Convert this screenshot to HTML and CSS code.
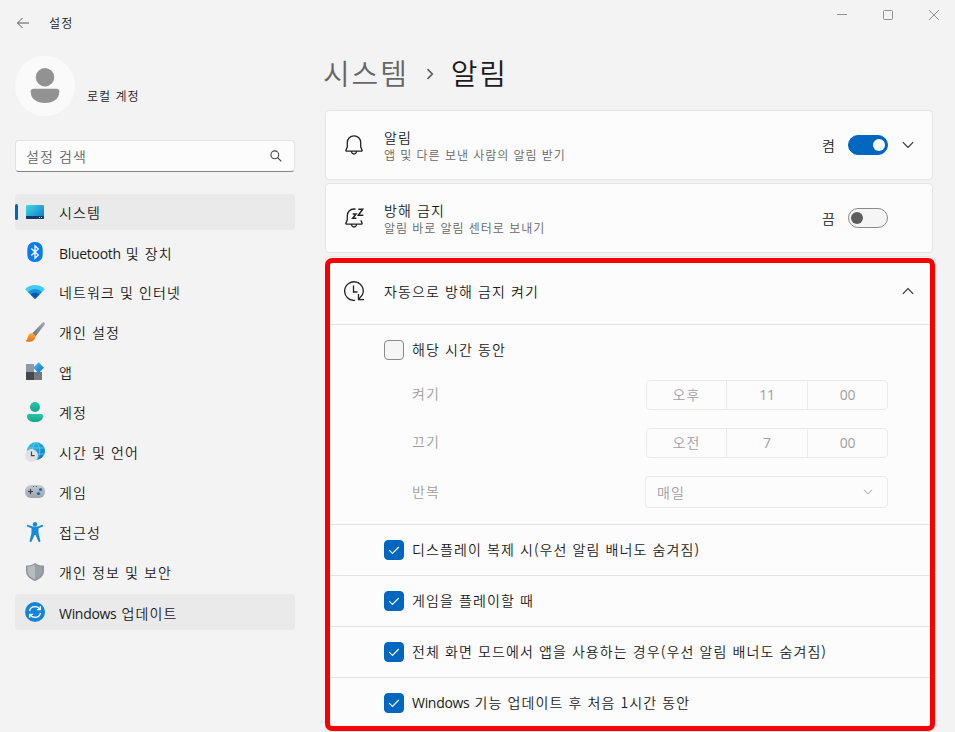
FILE: index.html
```html
<!DOCTYPE html>
<html lang="ko">
<head>
    <meta charset="UTF-8">
    <meta name="viewport" content="width=device-width, initial-scale=1.0">
    <title>설정</title>
    <link rel="stylesheet" href="styles.css">
</head>
<body>
    <div class="window">
        <aside class="sidebar">
            <div class="titlebar">
                <svg class="back" width="14" height="12" viewBox="0 0 14 12"><path d="M13 6H1.5M6.5 1L1.5 6l5 5"/></svg>
                <span>설정</span>
            </div>

            <div class="profile">
                <svg class="avatar" width="60" height="60" viewBox="0 0 60 60">
                    <circle cx="30" cy="30" r="30" fill="#fafafa"/>
                    <circle cx="30" cy="21.3" r="9.2" fill="#929292"/>
                    <path d="M18.5 32.7h23a2.8 2.8 0 0 1 2.8 2.8c0 7.5-6 11.5-14.3 11.5s-14.3-4-14.3-11.5a2.8 2.8 0 0 1 2.8-2.8z" fill="#929292"/>
                </svg>
                <span class="account">로컬 계정</span>
            </div>

            <div class="search">
                <span>설정 검색</span>
                <svg width="12" height="12" viewBox="0 0 12 12"><circle cx="4.8" cy="4.8" r="3.9"/><path d="M7.6 7.6l3.7 3.7"/></svg>
            </div>

            <nav class="menu">
                <a class="item active">
                    <svg width="20" height="20" viewBox="0 0 20 20">
                        <defs><linearGradient id="sys" x1="0" y1="0" x2="1" y2="1"><stop offset="0" stop-color="#3ddbe4"/><stop offset="1" stop-color="#1272c4"/></linearGradient></defs>
                        <rect x="1" y="3" width="18" height="14" rx="1" fill="url(#sys)"/>
                        <path d="M1 14h18v2a1 1 0 0 1-1 1H2a1 1 0 0 1-1-1z" fill="#0b3f66"/>
                        <path d="M14 15h1v1h-1zM16 15h1v1h-1z" fill="#9fd8ee"/>
                    </svg>
                    <span>시스템</span>
                </a>
                <a class="item">
                    <svg width="20" height="20" viewBox="0 0 20 20">
                        <rect x="2.3" y="0" width="15.4" height="20" rx="7" fill="#0a7cf0"/>
                        <path d="M6.3 6.5l7 6.5-3.3 3.3V3.7l3.3 3.3-7 6.5" fill="none" stroke="#fff" stroke-width="1.3"/>
                    </svg>
                    <span class="mixed"><b class="latin">Bluetooth</b> 및 장치</span>
                </a>
                <a class="item">
                    <svg width="20" height="20" viewBox="0 0 20 20">
                        <path d="M.2 7.2C5.5 1.7 14.5 1.7 19.8 7.2L10 17z" fill="#41cbf5"/>
                        <path d="M3 10C7 6 13 6 17 10l-7 7z" fill="#1a8fdc"/>
                        <path d="M5.6 12.5c2.6-2.3 6.2-2.3 8.8 0L10 17z" fill="#0b5aa8"/>
                    </svg>
                    <span>네트워크 및 인터넷</span>
                </a>
                <a class="item">
                    <svg width="20" height="20" viewBox="0 0 20 20">
                        <defs>
                            <linearGradient id="handle" x1="1" y1="0" x2="0" y2="1"><stop offset="0" stop-color="#a5acb3"/><stop offset="1" stop-color="#69737c"/></linearGradient>
                            <linearGradient id="tip" x1="0" y1="0" x2="0" y2="1"><stop offset="0" stop-color="#fbb040"/><stop offset="1" stop-color="#ea6a13"/></linearGradient>
                        </defs>
                        <path d="M19.5.7c.7.7.4 1.7-.1 2.4L10.5 14.5 7.2 11.2 17.2 1c.7-.7 1.7-1 2.3-.3z" fill="url(#handle)"/>
                        <path d="M6.500 11.200c2 0 3.800 1.700 3.700 3.700-.1 3.200-3.200 4.800-6 4.800-1.600 0-3-.2-3.700-1 1.500-.3 1.900-1.600 2.200-3.500.3-2.300 1.600-4 3.800-4z" fill="url(#tip)"/>
                    </svg>
                    <span>개인 설정</span>
                </a>
                <a class="item">
                    <svg width="20" height="20" viewBox="0 0 20 20">
                        <defs><linearGradient id="app" x1="0" y1="0" x2="1" y2="1"><stop offset="0" stop-color="#42c4ee"/><stop offset="1" stop-color="#0f6fc9"/></linearGradient></defs>
                        <path d="M1 2h8v8H1z" fill="#919aa3"/>
                        <path d="M1 10h8v8H1z" fill="#44494e"/>
                        <path d="M9 10h8v8H9z" fill="#737a82"/>
                        <path d="M13.5.3l5.5 5.5-5.5 5.5L8.300 5.800z" fill="url(#app)"/>
                    </svg>
                    <span>앱</span>
                </a>
                <a class="item">
                    <svg width="20" height="20" viewBox="0 0 20 20">
                        <defs><linearGradient id="acc" x1="0" y1="0" x2="0" y2="1"><stop offset="0" stop-color="#2ac5a5"/><stop offset="1" stop-color="#12a68a"/></linearGradient></defs>
                        <circle cx="10" cy="5" r="5" fill="url(#acc)"/>
                        <path d="M4 12h12a2 2 0 0 1 2 2c0 4-3.500 6-8 6s-8-2-8-6a2 2 0 0 1 2-2z" fill="url(#acc)"/>
                    </svg>
                    <span>계정</span>
                </a>
                <a class="item">
                    <svg width="20" height="20" viewBox="0 0 20 20">
                        <defs><linearGradient id="globe" x1="0" y1="0" x2="1" y2="1"><stop offset="0" stop-color="#35c9e3"/><stop offset="1" stop-color="#0b6fc7"/></linearGradient></defs>
                        <circle cx="11" cy="9" r="9" fill="url(#globe)"/>
                        <path d="M2.500 6h17M10 12h9.500M11 0c-5 5-5 13 0 18M11 0c5 5 5 13 0 18" fill="none" stroke="#62d3ec" stroke-width=".8"/>
                        <circle cx="6.5" cy="13.5" r="6.5" fill="#dfe1e4"/>
                        <path d="M6.500 9.500v4.200h3.200" fill="none" stroke="#44494e" stroke-width="1.2"/>
                    </svg>
                    <span>시간 및 언어</span>
                </a>
                <a class="item">
                    <svg width="20" height="20" viewBox="0 0 20 20">
                        <defs><linearGradient id="pad" x1="0" y1="0" x2="0" y2="1"><stop offset="0" stop-color="#c5cad0"/><stop offset="1" stop-color="#9da4ac"/></linearGradient></defs>
                        <rect x="0" y="3" width="20" height="13" rx="6" fill="url(#pad)"/>
                        <path d="M5.500 7v5M3 9.500h5" stroke="#32383e" stroke-width="1.2"/>
                        <path d="M8 4h1v1H8zM11 4h1v1h-1z" fill="#555c64"/>
                        <circle cx="15.5" cy="7.5" r="1.6" fill="#0f6fc0"/>
                        <circle cx="13.5" cy="11.5" r="1.6" fill="#0f6fc0"/>
                    </svg>
                    <span>게임</span>
                </a>
                <a class="item">
                    <svg width="20" height="20" viewBox="0 0 20 20">
                        <circle cx="10" cy="2.2" r="2.2" fill="#1689dc"/>
                        <path d="M2.9 3.9L7.5 5.6h5l4.6-1.7" fill="none" stroke="#1689dc" stroke-width="2" stroke-linecap="round"/>
                        <path d="M6.500 5h7v6l1.800 7.500a1 1 0 0 1-2 .8L10.500 13h-1l-2.800 6.300a1 1 0 0 1-2-.8L6.500 11z" fill="#1689dc"/>
                    </svg>
                    <span>접근성</span>
                </a>
                <a class="item">
                    <svg width="20" height="20" viewBox="0 0 20 20">
                        <path d="M10 1c2.800 2 5.500 2.600 9 2.500V9c0 5-4 8-9 10C5 17 1 14 1 9V3.500C4.500 3.600 7.200 3 10 1z" fill="#8c939a"/>
                        <path d="M10 2.500c2.500 1.500 4.800 2 7.500 2V9c0 4-3 6.800-7.500 8.500z" fill="#9ba1a7"/>
                        <path d="M10 2.500C7.500 4 5.200 4.500 2.500 4.500V9c0 4 3 6.800 7.500 8.500z" fill="#b6bbc0"/>
                    </svg>
                    <span>개인 정보 및 보안</span>
                </a>
                <a class="item hover">
                    <svg width="20" height="20" viewBox="0 0 20 20">
                        <circle cx="10" cy="10" r="10" fill="#1484d8"/>
                        <path d="M4.500 9.200C5 6.500 7.300 4.700 10 4.700c2 0 3.800 1 4.800 2.600M15.500 10.800c-.5 2.700-2.800 4.500-5.500 4.500-2 0-3.800-1-4.800-2.600M15.300 4.300v3.400h-3.400M4.700 15.700v-3.400h3.400" fill="none" stroke="#fff" stroke-width="1.3"/>
                    </svg>
                    <span class="mixed"><b class="latin">Windows</b> 업데이트</span>
                </a>
            </nav>
        </aside>

        <main class="content">
            <div class="controls">
                <svg width="10" height="10" viewBox="0 0 10 10"><path d="M0 4.500h10"/></svg>
                <svg width="10" height="10" viewBox="0 0 10 10"><rect x=".5" y=".5" width="9" height="9" rx="1"/></svg>
                <svg width="10" height="10" viewBox="0 0 10 10"><path d="M0 0l10 10M10 0L0 10"/></svg>
            </div>

            <h1 class="breadcrumb">
                <span class="parent">시스템</span>
                <svg width="8" height="12" viewBox="0 0 8 12"><path d="M1.500 1.200L6.300 6l-4.800 4.800"/></svg>
                <span>알림</span>
            </h1>

            <section class="card">
                <svg class="card-icon" width="20" height="20" viewBox="0 0 20 20">
                    <path d="M10 .8c-3.800 0-6.700 3-6.700 6.700v4.300L1.800 15.500c-.1.400.1.700.5.700h15.400c.4 0 .6-.3.500-.7l-1.500-3.700V7.500c0-3.700-2.900-6.700-6.700-6.700zM7.500 16.500c.2 1.500 1.200 2.500 2.500 2.500s2.300-1 2.500-2.500"/>
                </svg>
                <div class="card-text">
                    <div>알림</div>
                    <div class="sub">앱 및 다른 보낸 사람의 알림 받기</div>
                </div>
                <span class="state">켬</span>
                <span class="toggle on"></span>
                <svg class="chevron" width="12" height="8" viewBox="0 0 12 8"><path d="M.8 1.200L6 6.400l5.200-5.200"/></svg>
            </section>

            <section class="card">
                <svg class="card-icon" width="20" height="20" viewBox="0 0 20 20">
                    <path d="M11.500 1H9.800C6 1 3.300 4 3.300 7.500v4.300L1.800 15.500c-.1.400.1.700.5.700h15.400c.4 0 .6-.3.500-.7l-1.300-3.300M7.500 16.500c.2 1.500 1.200 2.500 2.500 2.500s2.300-1 2.500-2.500"/>
                    <path class="zz" d="M8.700 6h3.300l-3.300 4.200h3.700M14.300 1.200h4.400l-4.400 6h5"/>
                </svg>
                <div class="card-text">
                    <div>방해 금지</div>
                    <div class="sub">알림 바로 알림 센터로 보내기</div>
                </div>
                <span class="state">끔</span>
                <span class="toggle"></span>
                <span class="chevron"></span>
            </section>

            <section class="group">
                <div class="group-head">
                    <svg class="card-icon" width="20" height="20" viewBox="0 0 20 20">
                        <path d="M18.200 14.300A9.300 9.300 0 1 0 11 19.300M9.500 4.500v6.500h4M14.500 13v5.700h5.500M14.500 18.700l4-5"/>
                    </svg>
                    <div class="card-text">자동으로 방해 금지 켜기</div>
                    <svg class="chevron" width="12" height="8" viewBox="0 0 12 8"><path d="M.8 6.800L6 1.600l5.200 5.200"/></svg>
                </div>

                <div class="schedule">
                    <div class="check-line"><span class="checkbox"></span><span class="label">해당 시간 동안</span></div>
                    <div class="field">
                        <span class="field-name">켜기</span>
                        <div class="time"><span>오후</span><span class="num">11</span><span class="num">00</span></div>
                    </div>
                    <div class="field">
                        <span class="field-name">끄기</span>
                        <div class="time"><span>오전</span><span class="num">7</span><span class="num">00</span></div>
                    </div>
                    <div class="field">
                        <span class="label">반복</span>
                        <div class="select">매일<svg width="10" height="6" viewBox="0 0 10 6"><path d="M1 .8L5 4.800 9 .8"/></svg></div>
                    </div>
                </div>

                <div class="option">
                    <span class="checkbox checked"><svg width="12" height="10" viewBox="0 0 12 10"><path d="M1.200 5.200l3.300 3.300L10.800 2"/></svg></span>
                    <span class="label">디스플레이 복제 시(우선 알림 배너도 숨겨짐)</span>
                </div>
                <div class="option">
                    <span class="checkbox checked"><svg width="12" height="10" viewBox="0 0 12 10"><path d="M1.200 5.200l3.300 3.300L10.800 2"/></svg></span>
                    <span class="label">게임을 플레이할 때</span>
                </div>
                <div class="option">
                    <span class="checkbox checked"><svg width="12" height="10" viewBox="0 0 12 10"><path d="M1.200 5.200l3.300 3.300L10.800 2"/></svg></span>
                    <span class="label">전체 화면 모드에서 앱을 사용하는 경우(우선 알림 배너도 숨겨짐)</span>
                </div>
                <div class="option">
                    <span class="checkbox checked"><svg width="12" height="10" viewBox="0 0 12 10"><path d="M1.200 5.200l3.300 3.300L10.800 2"/></svg></span>
                    <span class="label"><b class="latin">Windows</b> 기능 업데이트 후 처음 1시간 동안</span>
                </div>
            </section>
        </main>
    </div>
</body>
</html>
```
FILE: styles.css
```css
*,
*::before,
*::after {
    box-sizing: border-box;
}

body {
    margin: 0;
    height: 100vh;
    overflow: hidden;
    background-color: #f3f3f3;
    color: #1b1b1b;
    font-family: "Noto Sans CJK KR", sans-serif;
    font-size: 14px;
    font-weight: 350;
    line-height: 20px;
    letter-spacing: 1.1px;
    white-space: nowrap;
}

svg {
    display: block;
    flex: none;
}

.latin {
    font-family: "Open Sans", sans-serif;
    font-size: 14px;
    font-weight: 400;
    letter-spacing: -0.3px;
}

.window {
    display: flex;
    gap: 30px;
    height: 100vh;
    padding: 0 22px 0 15px;
    overflow: hidden;
}

/* Sidebar */
.sidebar {
    width: 280px;
    flex: none;
}

.titlebar {
    display: flex;
    align-items: center;
    gap: 19px;
    height: 46px;
    padding-left: 1px;
    font-size: 12px;
}

.back {
    fill: none;
    stroke: #555;
}

.profile {
    display: flex;
    align-items: center;
    gap: 12px;
    margin-top: 10px;
    font-size: 12px;
    letter-spacing: 1px;
}

.account {
    padding-top: 20px;
}

.search {
    display: flex;
    align-items: center;
    justify-content: space-between;
    height: 32px;
    margin-top: 24px;
    padding: 0 12px 0 10px;
    background-color: #fcfcfc;
    border: 1px solid #e3e3e3;
    border-bottom-color: #868686;
    border-radius: 4px;
    color: #666;
}

.search svg {
    fill: none;
    stroke: #444;
    stroke-width: 1.1;
}

.menu {
    display: flex;
    flex-direction: column;
    gap: 4px;
    margin-top: 22px;
}

.item {
    display: flex;
    align-items: center;
    gap: 14px;
    height: 36px;
    padding-left: 10px;
    border-radius: 4px;
}

.item .mixed {
    padding-top: 2px;
}

.item.active,
.item.hover {
    background-color: #eaeaea;
}

.item.active {
    position: relative;
}

.item.active::before {
    content: "";
    position: absolute;
    left: 0;
    top: 10px;
    width: 3px;
    height: 16px;
    border-radius: 2px;
    background-color: #0067c0;
}

/* Content */
.content {
    flex: 1;
}

.controls {
    display: flex;
    justify-content: flex-end;
    gap: 36px;
    height: 46px;
    padding-top: 10px;
    margin-right: -6px;
}

.controls svg {
    fill: none;
    stroke: #909090;
}

.breadcrumb {
    display: flex;
    align-items: center;
    gap: 17px;
    height: 54px;
    margin: 0 0 10px -2px;
    font-size: 29px;
    font-weight: 350;
    letter-spacing: 1.9px;
}

.breadcrumb span {
    padding-bottom: 2px;
}

.breadcrumb svg {
    margin-top: 1px;
    fill: none;
    stroke: #5f5f5f;
    stroke-width: 1.7;
}

.parent {
    color: #666;
}

.card {
    display: flex;
    align-items: center;
    height: 70px;
    margin-bottom: 3px;
    padding: 0 18px;
    background-color: #fcfcfc;
    border: 1px solid #e5e5e5;
    border-radius: 4px;
}

.card-icon {
    fill: none;
    stroke: #222;
    stroke-width: 1.3;
}

.card-icon .zz {
    stroke-width: 1.5;
}

.card-text {
    flex: 1;
    padding: 2px 0 0 20px;
    line-height: 18px;
}

.sub {
    color: #666;
    font-size: 12px;
    letter-spacing: 0.95px;
}

.state {
    margin-right: 12px;
}

.toggle {
    width: 40px;
    height: 20px;
    padding: 3px 2px;
    border: 1px solid #8a8a8a;
    border-radius: 10px;
    background-color: #f5f5f5;
}

.toggle::before {
    content: "";
    display: block;
    width: 12px;
    height: 12px;
    border-radius: 50%;
    background-color: #5d5d5d;
}

.toggle.on {
    border-color: #0067c0;
    background-color: #0067c0;
}

.toggle.on::before {
    margin-left: auto;
    background-color: #fff;
}

.chevron {
    width: 12px;
    margin-left: 14px;
    fill: none;
    stroke: #333;
    stroke-width: 1.2;
}

.group {
    position: relative;
    height: 476px;
    background-color: #fcfcfc;
    border: 1px solid #e5e5e5;
    border-radius: 4px;
}

/* Highlight frame drawn over the group */
.group::after {
    content: "";
    position: absolute;
    top: 1px;
    left: -1px;
    width: 610px;
    height: 473px;
    border: 5px solid #f80000;
    border-radius: 7px;
}

.group-head {
    display: flex;
    align-items: center;
    height: 67px;
    padding: 0 18px;
}

.group-head .card-text {
    padding-top: 0;
}

.schedule {
    height: 200px;
    padding: 15px 44px 0 58px;
    border-top: 1px solid #e5e5e5;
}

.check-line {
    display: flex;
    align-items: center;
    gap: 8px;
    height: 20px;
    margin-bottom: 20px;
}

.label {
    padding-bottom: 2px;
}

.field-name {
    padding-bottom: 4px;
}

.checkbox {
    display: flex;
    align-items: center;
    justify-content: center;
    flex: none;
    width: 20px;
    height: 20px;
    border: 1px solid #8a8a8a;
    border-radius: 4px;
    background-color: #f5f5f5;
}

.checkbox.checked {
    border-color: #0067c0;
    background-color: #0067c0;
}

.checkbox svg {
    fill: none;
    stroke: #fff;
    stroke-width: 1.2;
}

.field {
    display: flex;
    align-items: center;
    justify-content: space-between;
    margin-bottom: 18px;
    padding-left: 28px;
    color: #a0a0a0;
}

.time {
    display: grid;
    grid-template-columns: 79px 81px 80px;
    width: 242px;
    height: 30px;
    border: 1px solid #ebebeb;
    border-radius: 4px;
    line-height: 27px;
    text-align: center;
}

.time span + span {
    border-left: 1px solid #ebebeb;
}

.time .num {
    font-family: "Open Sans", sans-serif;
    font-weight: 400;
    line-height: 28px;
    letter-spacing: -0.2px;
}

.select {
    display: flex;
    align-items: center;
    justify-content: space-between;
    width: 243px;
    height: 32px;
    padding: 0 14px 1px 11px;
    border: 1px solid #ebebeb;
    border-radius: 4px;
}

.select svg {
    fill: none;
    stroke: #a0a0a0;
}

.option {
    display: flex;
    align-items: center;
    gap: 8px;
    height: 51px;
    padding-left: 58px;
    border-top: 1px solid #e5e5e5;
}
```
